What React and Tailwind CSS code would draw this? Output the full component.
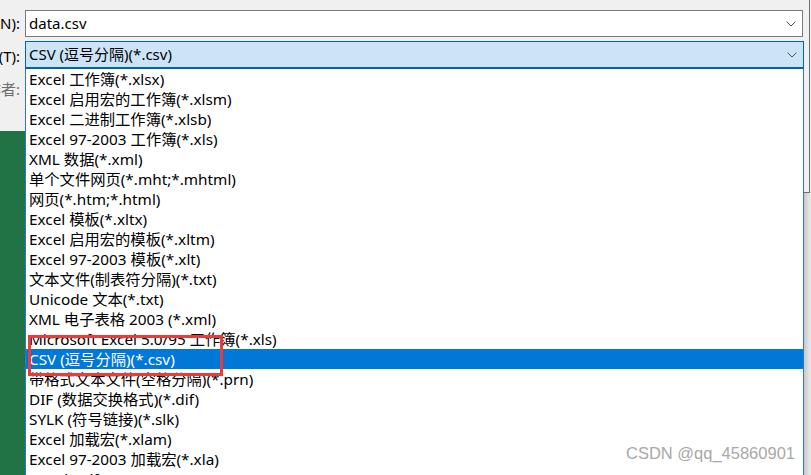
import React from "react";

const types = [
  "Excel 工作簿(*.xlsx)",
  "Excel 启用宏的工作簿(*.xlsm)",
  "Excel 二进制工作簿(*.xlsb)",
  "Excel 97-2003 工作簿(*.xls)",
  "XML 数据(*.xml)",
  "单个文件网页(*.mht;*.mhtml)",
  "网页(*.htm;*.html)",
  "Excel 模板(*.xltx)",
  "Excel 启用宏的模板(*.xltm)",
  "Excel 97-2003 模板(*.xlt)",
  "文本文件(制表符分隔)(*.txt)",
  "Unicode 文本(*.txt)",
  "XML 电子表格 2003 (*.xml)",
  "Microsoft Excel 5.0/95 工作簿(*.xls)",
  "CSV (逗号分隔)(*.csv)",
  "带格式文本文件(空格分隔)(*.prn)",
  "DIF (数据交换格式)(*.dif)",
  "SYLK (符号链接)(*.slk)",
  "Excel 加载宏(*.xlam)",
  "Excel 97-2003 加载宏(*.xla)",
  "PDF(*.pdf)",
];

const Chevron = () => (
  <svg width="10" height="6" viewBox="0 0 10 6" className="shrink-0">
    <path d="M0.5 0.5 L5 5 L9.5 0.5" fill="none" stroke="#505050" strokeWidth="1" />
  </svg>
);

export default function App() {
  const selected = 14;

  return (
    <div
      className="relative w-[811px] h-[475px] overflow-hidden bg-[#f0f0f0] flex text-[15px] text-black"
      style={{ fontFamily: '"Noto Sans", "Noto Sans CJK SC", sans-serif' }}
    >
      {/* labels column */}
      <div className="w-[25px] shrink-0 flex flex-col">
        <div className="h-[10px]" />
        <div className="h-[27px] flex items-center justify-end overflow-hidden whitespace-nowrap pr-[5px]">
          文件名(N):
        </div>
        <div className="h-[5px]" />
        <div className="h-[28px] flex items-center justify-end overflow-hidden whitespace-nowrap pr-[5px]">
          保存类型(T):
        </div>
        <div className="h-[20px] mt-[9px] flex items-center justify-end overflow-hidden whitespace-nowrap pr-[5px] text-[#6d6d6d]">
          作者:
        </div>
        <div className="h-[32px]" />
        <div className="flex-1 bg-[#217346]" />
      </div>

      {/* fields + list */}
      <div className="w-[779px] shrink-0 flex flex-col">
        <div className="h-[10px]" />
        <div className="h-[27px] mr-[1px] border border-[#7a7a7a] bg-white flex items-center pl-[3px] pr-[6px]">
          <span className="flex-1">data.csv</span>
          <Chevron />
        </div>
        <div className="h-[4px]" />
        <div className="h-[28px] border border-b-2 border-[#0063b1] bg-[#cce4f7] flex items-center pl-[3px] pr-[6px]">
          <span className="flex-1">CSV (逗号分隔)(*.csv)</span>
          <Chevron />
        </div>
        <div className="flex-1 bg-white border-x border-[#2b79c7] overflow-hidden text-[15.3px]">
          {types.map((t, i) => (
            <div
              key={t}
              className={
                i === selected
                  ? "h-[20px] leading-[20px] pl-[3px] whitespace-nowrap bg-[#0078d7] text-white"
                  : "h-[20px] leading-[20px] pl-[3px] whitespace-nowrap"
              }
            >
              {t}
            </div>
          ))}
        </div>
      </div>

      {/* right edge: dialog behind + shadow */}
      <div className="flex-1 flex flex-col">
        <div className="h-[193px] w-[6px] border-r border-b border-[#6e6e6e] bg-[#f0f0f0]" />
        <div className="flex-1 bg-gradient-to-r from-[#c8c8c8] to-[#ececec]" />
      </div>

      {/* red highlight box */}
      <div className="absolute left-[28px] top-[335px] w-[195px] h-[41px] border-[3px] border-[#ec3b3b]" />

      {/* watermark */}
      <div
        className="absolute right-[16px] bottom-[9px] text-[16.5px] text-[#a8a8a8] whitespace-nowrap"
        style={{ fontFamily: '"Liberation Sans", sans-serif' }}
      >
        CSDN @qq_45860901
      </div>
    </div>
  );
}
